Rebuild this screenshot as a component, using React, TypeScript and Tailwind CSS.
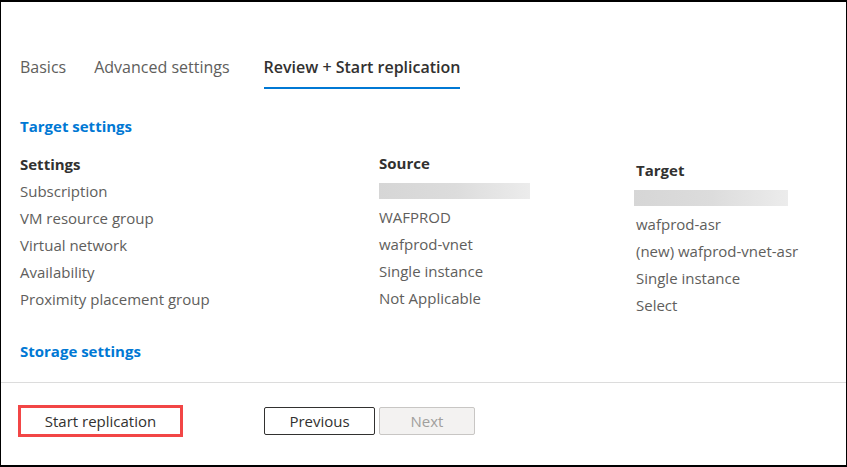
import React from 'react';

const rows = [
  { label: 'Subscription', source: null, target: null },
  { label: 'VM resource group', source: 'WAFPROD', target: 'wafprod-asr' },
  { label: 'Virtual network', source: 'wafprod-vnet', target: '(new) wafprod-vnet-asr' },
  { label: 'Availability', source: 'Single instance', target: 'Single instance' },
  { label: 'Proximity placement group', source: 'Not Applicable', target: 'Select' },
];

function Redacted({ width }: { width: string }) {
  return (
    <div className="h-[27px] flex items-center">
      <div className={`${width} h-[16px] bg-gradient-to-r from-[#d6d6d6] via-[#dcdcdc] to-[#ececec]`} />
    </div>
  );
}

export default function App() {
  return (
    <div className="w-[847px] h-[467px] bg-white border-black border-t-2 border-b-2 border-x flex flex-col text-[15px] text-[#605e5c] font-['Segoe_UI','Open_Sans',sans-serif] overflow-hidden">
      {/* Tabs */}
      <div className="pt-[54px] pl-[19px] flex gap-[28px] text-[16px] leading-[22px]">
        <div className="pb-[10px]">Basics</div>
        <div className="pb-[10px]">Advanced settings</div>
        <div className="pb-[9px] ml-[6px] border-b-2 border-[#0078d4] text-[#323130] font-semibold">
          Review + Start replication
        </div>
      </div>

      {/* Target settings */}
      <div className="pl-[19px] pt-[26px] text-[#0078d4] font-bold leading-[22px]">Target settings</div>

      <div className="flex pl-[19px] pt-[14px] leading-[27px]">
        <div className="w-[359px] flex flex-col">
          <div className="text-[#323130] font-bold">Settings</div>
          {rows.map((r) => (
            <div key={r.label}>{r.label}</div>
          ))}
        </div>
        <div className="w-[257px] flex flex-col">
          <div className="text-[#323130] font-bold -mt-[1px]">Source</div>
          <Redacted width="w-[151px]" />
          {rows.slice(1).map((r) => (
            <div key={r.label}>{r.source}</div>
          ))}
        </div>
        <div className="flex flex-col pt-[6px]">
          <div className="text-[#323130] font-bold">Target</div>
          <Redacted width="w-[154px] -ml-[2px]" />
          {rows.slice(1).map((r) => (
            <div key={r.label}>{r.target}</div>
          ))}
        </div>
      </div>

      {/* Storage settings */}
      <div className="pl-[19px] pt-[21px] text-[#0078d4] font-bold leading-[22px]">Storage settings</div>

      <div className="mt-[20px] border-t border-[#dcdcdc]" />

      {/* Footer buttons */}
      <div className="flex items-start pl-[17px] pt-[22px] text-[#323130]">
        <button className="w-[165px] h-[32px] border-[3px] border-[#f24646] flex items-center justify-center">
          Start replication
        </button>
        <button className="mt-[2px] ml-[81px] w-[111px] h-[28px] border border-[#323130] rounded-[2px] flex items-center justify-center">
          Previous
        </button>
        <button className="mt-[2px] ml-[4px] w-[96px] h-[28px] border border-[#c8c6c4] bg-[#f3f2f1] text-[#a19f9d] rounded-[2px] flex items-center justify-center">
          Next
        </button>
      </div>
    </div>
  );
}
